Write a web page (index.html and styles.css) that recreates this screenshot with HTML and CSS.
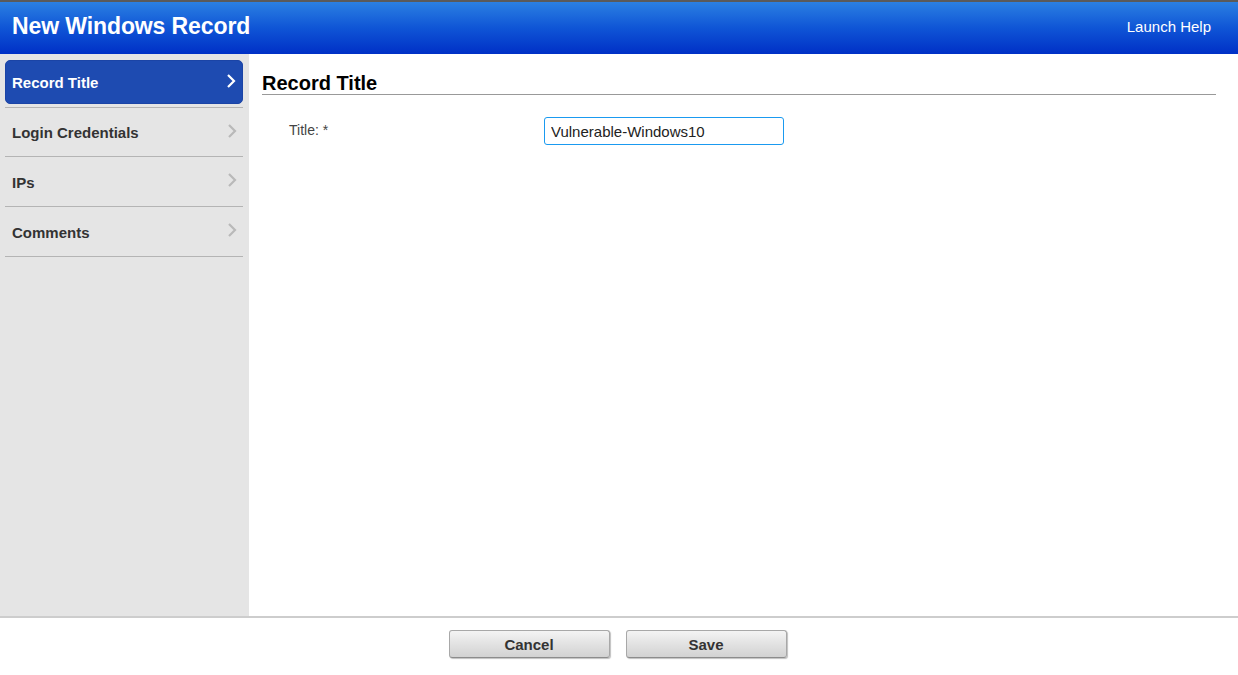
FILE: index.html
```html
<!DOCTYPE html>
<html>
<head>
<meta charset="utf-8">
<link rel="stylesheet" href="styles.css">
</head>
<body>
<div class="app">
  <header class="topbar">
    <h1 class="title">New Windows Record</h1>
    <a class="help">Launch Help</a>
  </header>
  <div class="body">
    <nav class="side">
      <div class="item active"><span>Record Title</span><svg class="chev" width="10" height="16" viewBox="0 0 10 16"><path d="M2 2 L8 8 L2 14" fill="none" stroke="currentColor" stroke-width="2.2"/></svg></div>
      <div class="item"><span>Login Credentials</span><svg class="chev" width="10" height="16" viewBox="0 0 10 16"><path d="M2 2 L8 8 L2 14" fill="none" stroke="currentColor" stroke-width="2.2"/></svg></div>
      <div class="item"><span>IPs</span><svg class="chev" width="10" height="16" viewBox="0 0 10 16"><path d="M2 2 L8 8 L2 14" fill="none" stroke="currentColor" stroke-width="2.2"/></svg></div>
      <div class="item"><span>Comments</span><svg class="chev" width="10" height="16" viewBox="0 0 10 16"><path d="M2 2 L8 8 L2 14" fill="none" stroke="currentColor" stroke-width="2.2"/></svg></div>
    </nav>
    <main class="content">
      <h2 class="section">Record Title</h2>
      <div class="row">
        <label class="label">Title: *</label>
        <input class="field" type="text" value="Vulnerable-Windows10">
      </div>
    </main>
  </div>
  <footer class="foot">
    <button class="btn">Cancel</button>
    <button class="btn">Save</button>
  </footer>
</div>
</body>
</html>
```
FILE: styles.css
```css
* { box-sizing: border-box; }
html, body { margin: 0; padding: 0; }
body {
  font-family: "Liberation Sans", Arial, sans-serif;
  background: #fff;
  width: 1238px;
  height: 675px;
  overflow: hidden;
}
.app { display: flex; flex-direction: column; height: 675px; }
.topbar {
  height: 54px;
  border-top: 2px solid #5a5a5a;
  background: linear-gradient(to bottom, #2b80e2 0%, #0f55d6 50%, #0030c6 100%);
  display: flex;
  align-items: center;
  justify-content: space-between;
  padding: 0 27px 3px 12px;
  flex: none;
}
.title {
  margin: 0;
  color: #fff;
  font-size: 23px;
  font-weight: bold;
  letter-spacing: -0.1px;
}
.help { color: #fff; font-size: 15px; }
.body { flex: 1; display: flex; min-height: 0; }
.side {
  width: 249px;
  background: #e5e5e5;
  padding: 6px 6px 0 5px;
  flex: none;
}
.item {
  height: 50px;
  display: flex;
  align-items: center;
  justify-content: space-between;
  padding: 1px 6px 0 7px;
  border-bottom: 1px solid #b4b4b4;
  font-size: 15px;
  font-weight: bold;
  color: #333;
}
.item .chev { color: #b9b9b9; margin-top: -4px; }
.item.active {
  height: 44px;
  margin-bottom: 3px;
  background: #1e4bb1;
  color: #fff;
  border-radius: 5px;
  border: 1px solid #1b44a6;
  padding: 0 6px 0 6px;
}
.item.active .chev { color: #fff; margin-top: -2px; }
.item.active + .item { border-top: 1px solid #b4b4b4; height: 50px; }
.content { flex: 1; padding: 0 22px 0 13px; }
.section {
  margin: 19px 0 0 0;
  font-size: 20px;
  font-weight: bold;
  color: #000;
  border-bottom: 1px solid #999;
  padding-bottom: 0;
  line-height: 21px;
}
.row { display: flex; align-items: center; margin-top: 22px; }
.label {
  width: 282px;
  padding-left: 27px;
  font-size: 14px;
  color: #444;
  margin-top: -3px;
}
.field {
  width: 240px;
  height: 28px;
  border: 1px solid #1a9af0;
  border-radius: 3px;
  font-family: "Liberation Sans", Arial, sans-serif;
  font-size: 15px;
  color: #222;
  padding: 0 6px;
  outline: none;
}
.foot {
  height: 59px;
  flex: none;
  border-top: 2px solid #cdcdcd;
  display: flex;
  justify-content: center;
  gap: 16px;
  padding-top: 12px;
  padding-right: 3px;
}
.btn {
  width: 161px;
  height: 28px;
  border: 1px solid #a8a8a8;
  border-bottom-color: #8c8c8c;
  border-radius: 3px;
  background: linear-gradient(to bottom, #f4f4f4 0%, #e2e2e2 50%, #d2d2d2 100%);
  box-shadow: 1px 1px 1px rgba(0,0,0,0.25);
  font-family: "Liberation Sans", Arial, sans-serif;
  font-weight: bold;
  font-size: 15px;
  color: #333;
  padding: 0;
}
```
